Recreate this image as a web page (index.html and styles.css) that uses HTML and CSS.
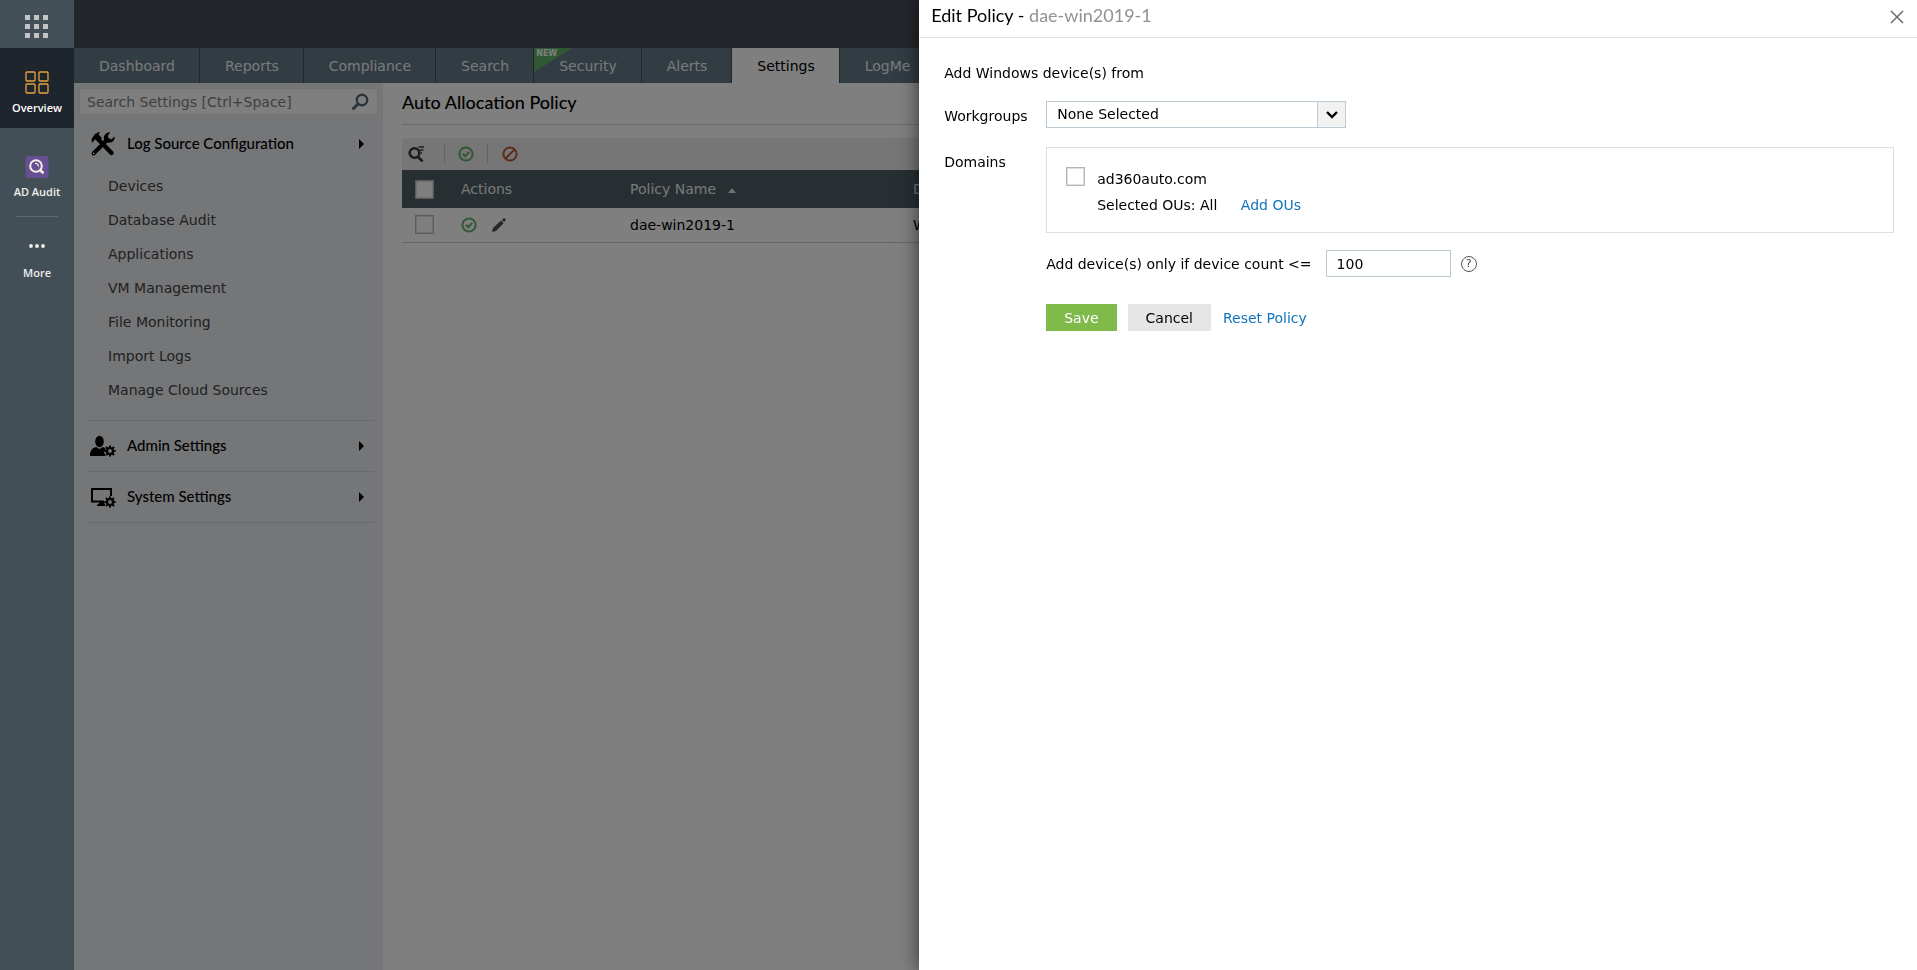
FILE: index.html
```html
<!DOCTYPE html>
<html lang="en">
<head>
<meta charset="utf-8">
<title>Edit Policy</title>
<link rel="stylesheet" href="styles.css">
</head>
<body>
<svg class="defs" width="0" height="0" aria-hidden="true">
  <symbol id="gear" viewBox="0 0 12 12">
    <g fill="none" stroke="#000">
      <circle cx="6" cy="6" r="3" stroke-width="2.2"/>
      <path stroke-width="2" d="M6 .4v1.8M6 9.8v1.8M.4 6h1.8M9.8 6h1.8M2 2l1.3 1.3M8.7 8.7 10 10M2 10l1.3-1.3M8.7 3.3 10 2"/>
    </g>
  </symbol>
  <symbol id="approve" viewBox="0 0 16 16">
    <g fill="none" stroke="#62b068" stroke-width="2">
      <circle cx="8" cy="8" r="6.6"/>
      <path d="m4.8 7.8 2.4 2.4 4-4.4"/>
    </g>
  </symbol>
</svg>
<div class="app">
  <nav class="rail" aria-label="Products">
    <button class="rail-apps" aria-label="Applications">
      <svg width="24" height="24" viewBox="0 0 24 24" fill="#c3c4c3"><path d="M0 0h5v5H0zM9 0h5v5H9zM18 0h5v5h-5zM0 9h5v5H0zM9 9h5v5H9zM18 9h5v5h-5zM0 18h5v5H0zM9 18h5v5H9zM18 18h5v5h-5z"/></svg>
    </button>
    <a class="rail-item active" href="#">
      <svg width="24" height="24" viewBox="0 0 24 24" fill="none" stroke="#e8a23e" stroke-width="1.3"><rect x="1" y="1" width="9" height="9" rx="1"/><rect x="14" y="1" width="9" height="9" rx="1"/><rect x="1" y="13" width="9" height="9" rx="1"/><rect x="14" y="13" width="9" height="9" rx="1"/></svg>
      <span>Overview</span>
    </a>
    <a class="rail-item audit" href="#">
      <svg width="24" height="24" viewBox="0 0 24 24"><rect x=".5" y="1" width="23" height="22" rx="3" fill="#674f91"/><circle cx="11" cy="11" r="5.8" fill="none" stroke="#f4f0e8" stroke-width="2"/><path d="m14.5 14.5 4 3.8" stroke="#f4f0e8" stroke-width="2.6"/><path d="M10 8.4a3 3 0 0 1 3.4 3.2" fill="none" stroke="#f4f0e8" stroke-width="1.2"/></svg>
      <span>AD Audit</span>
    </a>
    <a class="rail-item more" href="#">
      <svg width="18" height="6" viewBox="0 0 18 6" fill="#eeeeec"><circle cx="3" cy="3" r="1.9"/><circle cx="9" cy="3" r="1.9"/><circle cx="15" cy="3" r="1.9"/></svg>
      <span>More</span>
    </a>
  </nav>
  <div class="page">
    <header class="topbar"></header>
    <nav class="tabs" aria-label="Main">
      <a href="#">Dashboard</a><a href="#">Reports</a><a href="#">Compliance</a><a href="#">Search</a><a href="#" class="has-new"><span class="new">NEW</span>Security</a><a href="#">Alerts</a><a href="#" class="current">Settings</a><a href="#">LogMe</a>
    </nav>
    <div class="columns">
      <aside class="side">
        <form class="search">
          <input type="text" aria-label="Search Settings" placeholder="Search Settings [Ctrl+Space]">
          <svg width="18" height="18" viewBox="0 0 18 18" fill="none" stroke="#546874"><circle cx="11" cy="7" r="5.2" stroke-width="2.4"/><path d="m7 11-5.4 5.4" stroke-width="3"/></svg>
        </form>
        <section class="group open">
          <button class="group-title">
            <svg width="26" height="26" viewBox="0 0 26 26"><path fill="none" stroke="#000" stroke-width="4.4" stroke-linecap="round" d="m8 8 13.5 14"/><path fill="#000" d="M2 12 1.500 8 5 3l4-2 1 .2-1.500 2.300L12 7 8.500 10.500 6 8.200 4 9.500z"/><path fill="none" stroke="#000" stroke-width="4" stroke-linecap="round" d="M3.500 22.500 17 9"/><path fill="#000" d="M14 9c-1-4 2-8 6-7.600L17.800 5l1 2.500 2.600.7L24.600 5.500c.6 4-3 7-7 6z"/><circle cx="3.700" cy="22.300" r=".9" fill="#eaecf0"/></svg>
            <span>Log Source Configuration</span><i class="caret"></i>
          </button>
          <ul class="links">
            <li><a href="#">Devices</a></li>
            <li><a href="#">Database Audit</a></li>
            <li><a href="#">Applications</a></li>
            <li><a href="#">VM Management</a></li>
            <li><a href="#">File Monitoring</a></li>
            <li><a href="#">Import Logs</a></li>
            <li><a href="#">Manage Cloud Sources</a></li>
          </ul>
        </section>
        <section class="group">
          <button class="group-title">
            <svg width="26" height="22" viewBox="0 0 26 22"><ellipse cx="9.500" cy="6.500" rx="4.300" ry="5.800"/><path d="M0 21c0-6 2.500-8 6-9l3.500 2 3.500-2c2 .5 2 1 2.500 2l-1.500 3 1.500 4z"/><use href="#gear" x="14" y="10" width="12" height="12"/></svg>
            <span>Admin Settings</span><i class="caret"></i>
          </button>
        </section>
        <section class="group">
          <button class="group-title">
            <svg width="26" height="22" viewBox="0 0 26 22"><path fill="none" stroke="#000" stroke-width="2" d="M14 15.500H2V3h19v7"/><path d="M8 18.500 10 16h4l1 2.500V20H7v-1.500z"/><use href="#gear" x="14" y="10" width="12" height="12"/></svg>
            <span>System Settings</span><i class="caret"></i>
          </button>
        </section>
      </aside>
      <main class="main">
        <h1>Auto Allocation Policy</h1>
        <div class="toolbar">
          <button aria-label="Search"><svg width="16" height="16" viewBox="0 0 16 16" fill="none" stroke="#34383b"><circle cx="6.500" cy="7" r="4.800" stroke-width="2.600"/><path d="m9.600 10.400 5 5" stroke-width="2.800"/><path d="M10.500 1H16M12 4h3.500M12.500 7H14" stroke-width="1.400"/></svg></button>
          <button aria-label="Enable"><svg width="16" height="16"><use href="#approve"/></svg></button>
          <button aria-label="Disable"><svg width="16" height="16" viewBox="0 0 16 16" fill="none" stroke="#b85a38" stroke-width="2"><circle cx="8" cy="8" r="6.600"/><path d="m3.800 12.200 8.400-8.400"/></svg></button>
        </div>
        <table class="grid">
          <thead><tr><th class="c-check"><input type="checkbox" aria-label="Select all"></th><th class="c-act">Actions</th><th class="c-name">Policy Name <i class="sort"></i></th><th>Device Type</th></tr></thead>
          <tbody><tr><td><input type="checkbox" aria-label="Select dae-win2019-1"></td><td><span class="acts"><button aria-label="Disable policy"><svg width="16" height="16"><use href="#approve"/></svg></button><button aria-label="Edit policy"><svg width="14" height="14" viewBox="0 0 14 14" fill="#46505a"><path d="M0 14 1 10 9 2.600 11.600 5.200 4 13zM9.800 1.900 11.400.4q1-.6 1.800.2t.3 1.800L12 4z"/></svg></button></span></td><td>dae-win2019-1</td><td>Windows</td></tr></tbody>
        </table>
      </main>
    </div>
    <div class="overlay"></div>
  </div>
</div>
<section class="panel" role="dialog" aria-labelledby="panel-title">
  <header class="panel-head">
    <h2 id="panel-title">Edit Policy - <span>dae-win2019-1</span></h2>
    <button class="close" aria-label="Close"><svg width="14" height="14" viewBox="0 0 14 14" fill="none" stroke="#6a6a6a" stroke-width="1.500"><path d="m1 1 12 12M13 1 1 13"/></svg></button>
  </header>
  <form class="panel-body">
    <p class="intro">Add Windows device(s) from</p>
    <label class="lbl" for="wg">Workgroups</label>
    <div class="select">
      <select id="wg"><option>None Selected</option></select>
      <span class="arrow"><svg width="12" height="8" viewBox="0 0 12 8" fill="none" stroke="#000" stroke-width="2.400"><path d="m1 1 5 5 5-5"/></svg></span>
    </div>
    <span class="lbl domains">Domains</span>
    <div class="box">
      <input type="checkbox" id="dom">
      <div>
        <label for="dom">ad360auto.com</label>
        <p>Selected OUs: All <a href="#">Add OUs</a></p>
      </div>
    </div>
    <div class="count">
      <label for="cnt">Add device(s) only if device count &lt;=</label>
      <input type="text" id="cnt" value="100">
      <button type="button" class="help" aria-label="Help">?</button>
    </div>
    <div class="buttons">
      <button type="button" class="save">Save</button>
      <button type="button" class="cancel">Cancel</button>
      <a href="#">Reset Policy</a>
    </div>
  </form>
</section>
</body>
</html>
```
FILE: styles.css
```css
* { box-sizing: border-box; }
body { margin: 0; font: 14px/20px "DejaVu Sans", Verdana, sans-serif; color: #000; overflow: hidden; }
a { color: #0f74bc; text-decoration: none; }
button { border: 0; padding: 0; background: none; font: inherit; color: inherit; display: flex; align-items: center; }
h1, h2, p, ul { margin: 0; padding: 0; font-weight: 400; }
svg { display: block; flex: none; }
input[type=checkbox] { appearance: none; display: block; flex: none; width: 19px; height: 19px; margin: 0; background: #fff; border: 1px solid #b4b7b9; box-shadow: inset 0 0 0 1px #dddfe0; }
.defs { position: absolute; }
.app { display: flex; min-height: 100vh; }

.rail { width: 74px; flex: none; background: #434f57; display: flex; flex-direction: column; }
.rail-apps { height: 48px; justify-content: center; padding-top: 6px; }
.rail-item { display: flex; flex-direction: column; align-items: center; color: #eeeeec; font: 600 11px/14px "Open Sans", sans-serif; }
.rail-item.active { height: 80px; padding-top: 23px; gap: 6px; background: #1f252d; color: #fff; }
.rail-item.audit { padding-top: 27px; gap: 6px; }
.rail-item.more { margin: 17px 16px 0; padding-top: 26px; gap: 17px; border-top: 1px solid #5c6a73; }

.page { flex: 1; min-width: 0; position: relative; display: flex; flex-direction: column; }
.topbar { height: 48px; background: #464f57; }
.tabs { display: flex; background: #647986; overflow: hidden; }
.tabs a { flex: none; height: 35px; padding: 0 24px 0 25px; line-height: 36px; color: #f4f4f4; border-right: 1px solid #464f57; position: relative; }
.tabs a.current { background: #fff; color: #000; }
.new { position: absolute; left: 0; top: 0; width: 38px; height: 24px; padding-left: 2px; background: #62b068; clip-path: polygon(0 0, 100% 0, 0 100%); font: 700 8px/11px "DejaVu Sans", sans-serif; color: #fff; }
.columns { flex: 1; display: flex; }
.overlay { position: absolute; inset: 0; background: rgba(0, 0, 0, .5); }

.side { width: 309px; flex: none; background: #ebedf1; padding: 5px 5px 0; }
.search { height: 27px; display: flex; align-items: center; background: #fff; border: 1px solid #e2e4e8; padding-right: 8px; }
.search input { flex: 1; min-width: 0; border: 0; padding: 0 7px; background: none; font: inherit; color: #777; }
.search input::placeholder { color: #7c8184; opacity: 1; }
.group { margin: 0 4px 0 8px; border-bottom: 1px solid #d2d4d8; }
.group-title { width: 100%; height: 50px; padding: 0 10px 0 3px; gap: 11px; font: 500 15px/20px Lato, sans-serif; }
.group-title span { flex: 1; text-align: left; padding-bottom: 2px; }
.group.open .group-title { height: 54px; padding-top: 4px; }
.caret { border-left: 5px solid #000; border-top: 5px solid transparent; border-bottom: 5px solid transparent; }
.links { list-style: none; padding: 0 0 13px 21px; }
.links a { display: block; line-height: 34px; color: #424242; }

.main { flex: 1; min-width: 0; padding: 0 19px; }
h1 { font: 500 18px/24px Lato, sans-serif; padding: 7px 0 10px; border-bottom: 1px solid #d4d4d4; }
.toolbar { display: flex; align-items: center; height: 32px; margin-top: 13px; background: #ededed; }
.toolbar button { height: 20px; width: 43px; justify-content: center; border-right: 1px solid #c8c8c8; }
.toolbar button:first-child { padding-right: 14px; }
.toolbar button:last-child { border: 0; }
.grid { width: 100%; border-collapse: collapse; table-layout: fixed; }
.grid th { height: 38px; padding: 0; background: #505f66; color: #f0f0f0; font-weight: 400; text-align: left; }
.grid td { height: 34px; padding: 0; border-bottom: 1px solid #cfcfcf; }
.c-check { width: 59px; }
.c-act { width: 169px; }
.c-name { width: 283px; }
.grid input { margin-left: 13px; }
.acts { display: flex; align-items: center; gap: 15px; }
.sort { display: inline-block; margin-left: 8px; vertical-align: 1px; border-bottom: 5px solid #e0e0e0; border-left: 4px solid transparent; border-right: 4px solid transparent; }

.panel { position: fixed; top: 0; right: 0; bottom: 0; width: calc(52% + 1px); background: #fff; box-shadow: 0 0 18px rgba(0, 0, 0, .6); }
.panel-head { display: flex; align-items: center; justify-content: space-between; height: 38px; padding: 0 13px 8px 12px; border-bottom: 1px solid #e2e2e2; }
.panel-head h2 { font: 400 18px/24px Lato, sans-serif; }
.panel-head h2 span { color: #929292; }
.close { padding-top: 4px; }
.panel-body { padding: 25px 23px 0 25px; display: grid; grid-template-columns: 102px 1fr; }
.intro { grid-column: 1 / -1; padding-bottom: 18px; }
.lbl { padding-top: 5px; }
.select { width: 300px; position: relative; margin-bottom: 19px; }
.select select { appearance: none; display: block; width: 100%; height: 27px; border: 1px solid #bccad3; border-radius: 0; background: #fff; padding: 0 10px 2px; font: inherit; color: #000; }
.arrow { position: absolute; top: 1px; right: 1px; bottom: 1px; width: 28px; display: flex; align-items: center; justify-content: center; background: #f2f2f2; border-left: 1px solid #bccad3; pointer-events: none; }
.box { display: flex; gap: 12px; border: 1px solid #dedede; padding: 19px 19px 14px; }
.box label { display: block; line-height: 26px; }
.box div { line-height: 26px; margin-top: -1px; }
.box a { margin-left: 19px; }
.count, .buttons { grid-column: 2; display: flex; align-items: center; }
.count { margin: 17px 0 27px; }
.count input { width: 125px; height: 27px; margin-left: 14px; padding: 0 10px; border: 1px solid #bccad3; font: inherit; }
.help { width: 16px; height: 16px; margin-left: 10px; justify-content: center; border: 1px solid #555; border-radius: 50%; color: #444; font-size: 11px; line-height: 14px; }
.buttons button { height: 27px; padding: 0 18px; }
.save { background: #7fba4a; color: #fff; }
.cancel { background: #e5e5e5; margin: 0 12px 0 11px; }
```
